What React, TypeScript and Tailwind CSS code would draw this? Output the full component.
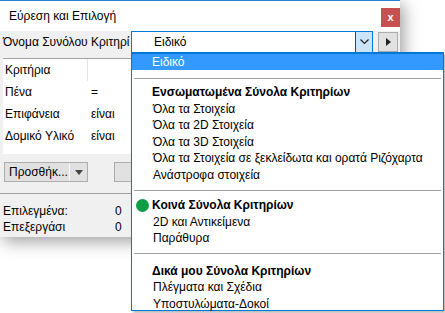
import React from "react";

function Item({ children }: { children: React.ReactNode }) {
  return <div className="h-[16.5px] leading-[16.5px] pl-[21px] whitespace-nowrap">{children}</div>;
}

function Header({ children, dot }: { children: React.ReactNode; dot?: boolean }) {
  return (
    <div className="relative h-[16.5px] leading-[16.5px] pl-[20px] font-bold whitespace-nowrap">
      {dot && <span className="absolute left-[4px] top-[1.5px] w-[13px] h-[13px] rounded-full bg-[#0f9d45]" />}
      {children}
    </div>
  );
}

function Sep() {
  return <div className="mx-[2px] h-px bg-[#a0a0a0]" />;
}

export default function App() {
  return (
    <div className="relative w-[445px] h-[313px] bg-white overflow-hidden text-[12px] text-black font-['Segoe_UI','Liberation_Sans',sans-serif]">
      {/* Dialog */}
      <div className="w-[400px] h-[237px] flex flex-col border-t border-[#2b7fd0] bg-[#f0f0f0] shadow-[3px_4px_16px_rgba(0,0,0,0.4)]">
        <div className="h-[30px] bg-white flex items-start justify-between">
          <span className="pl-[9px] pt-[7px] leading-[17px]">Εύρεση και Επιλογή</span>
          <div className="mt-[7px] w-[19px] h-[19px] bg-[#c75050] text-white text-[11px] font-bold flex items-center justify-center leading-none">
            x
          </div>
        </div>

        {/* name row */}
        <div className="flex items-center h-[22px]">
          <div className="w-[131px] pl-[3px] overflow-hidden whitespace-nowrap">Όνομα Συνόλου Κριτηρί</div>
          <div className="w-[242px] h-[22px] flex border border-[#0078d7] bg-white">
            <div className="flex-1 pl-[22px] leading-[20px]">Ειδικό</div>
            <div className="w-[17px] border-l border-[#005499] bg-[#cce4f7] flex items-center justify-center">
              <svg width="9" height="6" viewBox="0 0 9 6">
                <path d="M0.5 0.5 L4.5 4.5 L8.5 0.5" fill="none" stroke="#222" strokeWidth="1.2" />
              </svg>
            </div>
          </div>
          <div className="ml-[5px] w-[20px] h-[20px] border border-[#adadad] bg-[#e1e1e1] flex items-center justify-center">
            <svg width="5" height="8" viewBox="0 0 5 8">
              <path d="M0 0 L5 4 L0 8 Z" fill="#222" />
            </svg>
          </div>
        </div>

        {/* criteria table */}
        <div className="mt-[5px] ml-[3px] mr-[4px] h-[96px] bg-white border-t border-[#a0a0a0]">
          <div className="flex h-[22px] items-center">
            <div className="w-[85px] pl-[2px] border-r border-[#e5e5e5] h-full leading-[22px]">Κριτήρια</div>
          </div>
          <div className="flex h-[22px] items-center">
            <div className="w-[88px] pl-[2px]">Πένα</div>
            <div>=</div>
          </div>
          <div className="flex h-[22px] items-center">
            <div className="w-[88px] pl-[2px]">Επιφάνεια</div>
            <div>είναι</div>
          </div>
          <div className="flex h-[22px] items-center">
            <div className="w-[88px] pl-[2px]">Δομικό Υλικό</div>
            <div>είναι</div>
          </div>
        </div>

        {/* buttons */}
        <div className="flex mt-[8px] ml-[4px] h-[20px]">
          <div className="w-[84px] flex border border-[#adadad] bg-[#e1e1e1]">
            <div className="w-[65px] pl-[4px] leading-[18px] whitespace-nowrap overflow-hidden border-r border-[#f7f7f7]">Προσθήκ...</div>
            <div className="flex-1 flex items-center justify-center">
              <svg width="8" height="5" viewBox="0 0 8 5">
                <path d="M0 0 L8 0 L4 5 Z" fill="#444" />
              </svg>
            </div>
          </div>
          <div className="ml-[26px] w-[80px] border border-[#adadad] bg-[#e1e1e1]" />
        </div>

        <div className="mt-[11px] h-px bg-[#a0a0a0] w-[396px]" />

        <div className="mt-[9px] flex h-[16px] items-center pl-[3px]">
          <div className="w-[112px]">Επιλεγμένα:</div>
          <div>0</div>
        </div>
        <div className="flex h-[16px] items-center pl-[3px]">
          <div className="w-[112px]">Επεξεργάσι</div>
          <div>0</div>
        </div>
      </div>

      {/* Dropdown popup */}
      <div className="absolute left-[131px] top-[52px] w-[313px] h-[259px] bg-white border border-t-2 border-[#0078d7] shadow-[2px_2px_3px_rgba(0,0,0,0.3)]">
        <div className="h-[16px] leading-[16px] bg-[#3399ff] text-white pl-[20px]">Ειδικό</div>
        <div className="h-[8px]" />
        <Sep />
        <div className="h-[5px]" />
        <Header>Ενσωματωμένα Σύνολα Κριτηρίων</Header>
        <Item>Όλα τα Στοιχεία</Item>
        <Item>Όλα τα 2D Στοιχεία</Item>
        <Item>Όλα τα 3D Στοιχεία</Item>
        <Item>Όλα τα Στοιχεία σε ξεκλείδωτα και ορατά Ριζόχαρτα</Item>
        <Item>Ανάστροφα στοιχεία</Item>
        <div className="h-[7px]" />
        <Sep />
        <div className="h-[6px]" />
        <Header dot>Κοινά Σύνολα Κριτηρίων</Header>
        <Item>2D και Αντικείμενα</Item>
        <Item>Παράθυρα</Item>
        <div className="h-[6px]" />
        <Sep />
        <div className="h-[9px]" />
        <Header>Δικά μου Σύνολα Κριτηρίων</Header>
        <Item>Πλέγματα και Σχέδια</Item>
        <Item>Υποστυλώματα-Δοκοί</Item>
      </div>
    </div>
  );
}
